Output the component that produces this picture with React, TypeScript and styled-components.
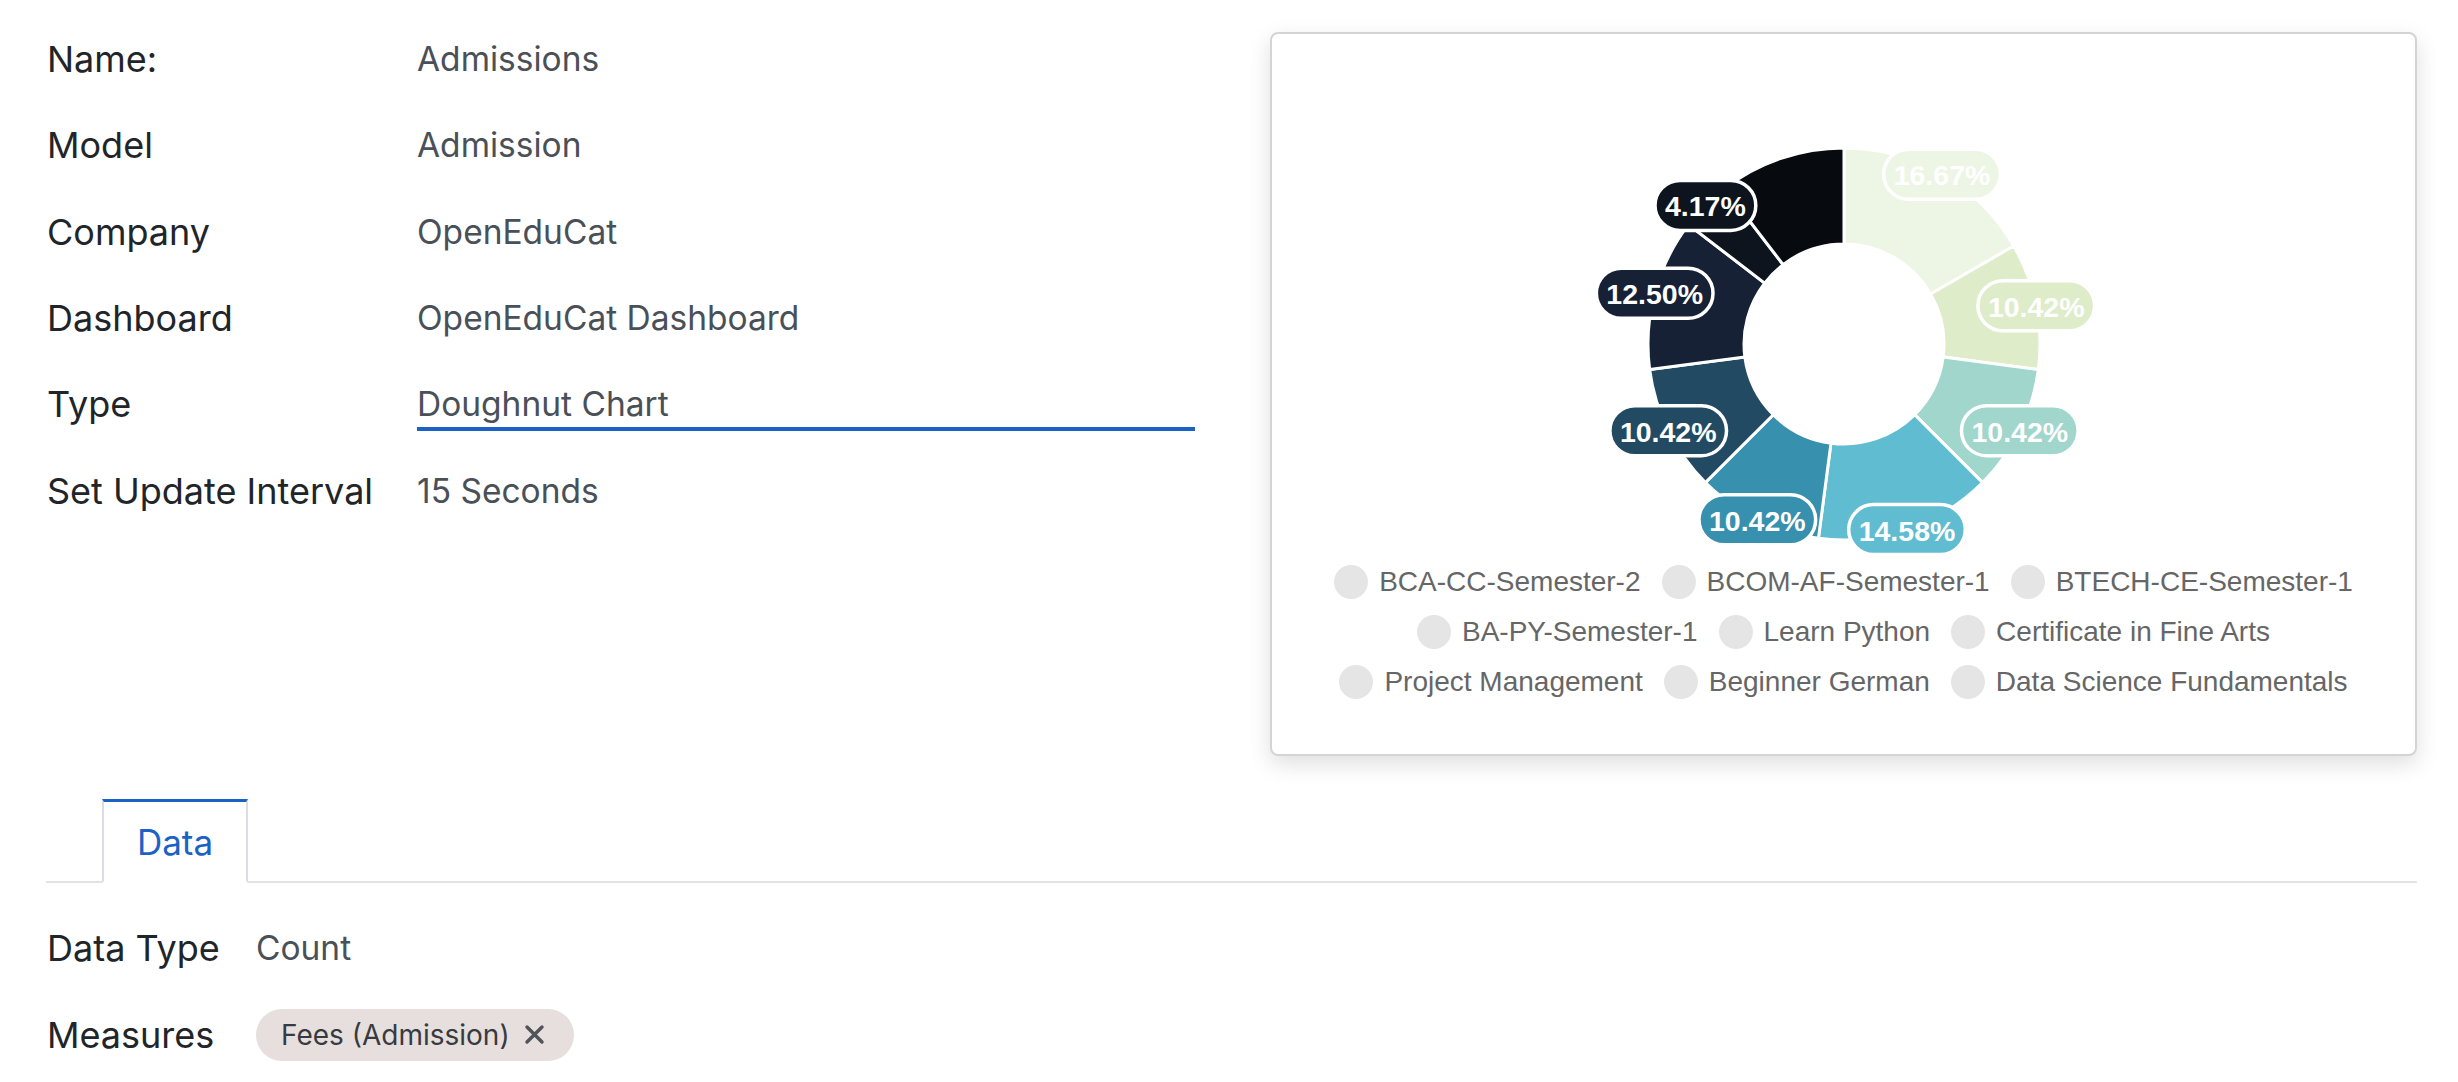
import * as React from 'react';
import styled, { createGlobalStyle } from 'styled-components';

const GlobalStyle = createGlobalStyle`
    body {
        margin: 0;
        background: #fff;
        font-family: Inter, "Noto Sans", sans-serif;
    }
`;

type Slice = { label: string; count: number; color: string; showLabel: boolean };

const slices: Slice[] = [
    { label: 'BCA-CC-Semester-2', count: 8, color: '#edf6e4', showLabel: true },
    { label: 'BCOM-AF-Semester-1', count: 5, color: '#deecc9', showLabel: true },
    { label: 'BTECH-CE-Semester-1', count: 5, color: '#a0d6cc', showLabel: true },
    { label: 'BA-PY-Semester-1', count: 7, color: '#60bcd0', showLabel: true },
    { label: 'Learn Python', count: 5, color: '#3790ae', showLabel: true },
    { label: 'Certificate in Fine Arts', count: 5, color: '#234a63', showLabel: true },
    { label: 'Project Management', count: 6, color: '#172136', showLabel: true },
    { label: 'Beginner German', count: 2, color: '#0d141e', showLabel: true },
    { label: 'Data Science Fundamentals', count: 5, color: '#070b10', showLabel: false },
];

const legendRows = [[0, 1, 2], [3, 4, 5], [6, 7, 8]];

const fields = [
    { label: 'Name:', value: 'Admissions' },
    { label: 'Model', value: 'Admission' },
    { label: 'Company', value: 'OpenEduCat' },
    { label: 'Dashboard', value: 'OpenEduCat Dashboard' },
    { label: 'Type', value: 'Doughnut Chart', focused: true },
    { label: 'Set Update Interval', value: '15 Seconds' },
];

// chart geometry (svg coords)
const CX = 572;
const CY = 310;
const R_OUT = 196;
const R_IN = 100;

const pt = (deg: number, r: number) => {
    const a = (deg * Math.PI) / 180;
    return [CX + r * Math.sin(a), CY - r * Math.cos(a)];
};

const arcPath = (a0: number, a1: number) => {
    const large = a1 - a0 > 180 ? 1 : 0;
    const [x0, y0] = pt(a0, R_OUT);
    const [x1, y1] = pt(a1, R_OUT);
    const [x2, y2] = pt(a1, R_IN);
    const [x3, y3] = pt(a0, R_IN);
    return `M${x0} ${y0} A${R_OUT} ${R_OUT} 0 ${large} 1 ${x1} ${y1} L${x2} ${y2} A${R_IN} ${R_IN} 0 ${large} 0 ${x3} ${y3} Z`;
};

const charW: Record<string, number> = { '.': 0.278, '%': 0.889 };
const textWidth = (s: string, size: number) =>
    s.split('').reduce((w, c) => w + (charW[c] ?? 0.556), 0) * size;

function Doughnut() {
    const total = slices.reduce((s, d) => s + d.count, 0);
    let acc = 0;
    const parts = slices.map((d) => {
        const a0 = (acc / total) * 360;
        acc += d.count;
        const a1 = (acc / total) * 360;
        return { ...d, a0, a1, pct: ((d.count / total) * 100).toFixed(2) + '%' };
    });

    return (
        <ChartSvg viewBox="0 0 1143 523">
            {parts.map((p) => (
                <path key={p.label} d={arcPath(p.a0, p.a1)} fill={p.color} stroke="#fff" strokeWidth={3} />
            ))}
            {parts.filter((p) => p.showLabel).map((p) => {
                const [x, y] = pt((p.a0 + p.a1) / 2, R_OUT);
                const w = textWidth(p.pct, 28.5) + 20;
                const h = 50;
                return (
                    <g key={p.label + '-lbl'}>
                        <rect x={x - w / 2} y={y - h / 2} width={w} height={h} rx={25} fill={p.color} stroke="#fff" strokeWidth={3.5} />
                        <text
                            x={x}
                            y={y + 1}
                            textAnchor="middle"
                            dominantBaseline="central"
                            fill="#fff"
                            fontFamily='"Liberation Sans", Arial, sans-serif'
                            fontWeight={700}
                            fontSize={28.5}
                        >
                            {p.pct}
                        </text>
                    </g>
                );
            })}
        </ChartSvg>
    );
}

export default function App() {
    return (
        <>
            <GlobalStyle />
            <Page>
                <Top>
                    <FormGrid>
                        {fields.map((f) => (
                            <React.Fragment key={f.label}>
                                <Label>{f.label}</Label>
                                <ValueCell>
                                    <Value focused={!!f.focused}>{f.value}</Value>
                                </ValueCell>
                            </React.Fragment>
                        ))}
                    </FormGrid>
                    <Card>
                        <Doughnut />
                        <Legend>
                            {legendRows.map((row, i) => (
                                <LegendRow key={i}>
                                    {row.map((idx) => (
                                        <LegendItem key={idx}>
                                            <LegendDot />
                                            {slices[idx].label}
                                        </LegendItem>
                                    ))}
                                </LegendRow>
                            ))}
                        </Legend>
                    </Card>
                </Top>
                <Notebook>
                    <TabBar>
                        <Tab>Data</Tab>
                    </TabBar>
                    <DataGrid>
                        <Label>Data Type</Label>
                        <PlainValue>Count</PlainValue>
                        <Label>Measures</Label>
                        <div>
                            <Chip>
                                Fees (Admission)
                                <ChipClose>
                                    <svg width="21" height="21" viewBox="0 0 21 21">
                                        <path d="M3 3 L18 18 M18 3 L3 18" stroke="currentColor" strokeWidth="3.4" strokeLinecap="round" />
                                    </svg>
                                </ChipClose>
                            </Chip>
                        </div>
                    </DataGrid>
                </Notebook>
            </Page>
        </>
    );
}

const Page = styled.div`
    width: 2458px;
    height: 1082px;
    overflow: hidden;
`;

const Top = styled.div`
    display: flex;
    justify-content: space-between;
    align-items: flex-start;
    padding-right: 41px;
`;

const FormGrid = styled.div`
    display: grid;
    grid-template-columns: 370px 778px;
    grid-auto-rows: 86.3px;
    align-items: center;
    margin: 16px 0 0 47px;
`;

const Label = styled.div`
    font-size: 36px;
    color: #212529;
    line-height: 42px;
    white-space: nowrap;
`;

const ValueCell = styled.div`
    align-self: center;
`;

const Value = styled.div<{ focused: boolean }>`
    font-size: 33.5px;
    line-height: 42px;
    color: #4a5058;
    padding-bottom: ${(p) => (p.focused ? '2px' : '0')};
    margin-bottom: ${(p) => (p.focused ? '-6px' : '0')};
    border-bottom: ${(p) => (p.focused ? '4px solid #1b62c6' : 'none')};
`;

const Card = styled.div`
    box-sizing: border-box;
    width: 1147px;
    height: 724px;
    margin-top: 32px;
    border: 2px solid #d4d4d4;
    border-radius: 8px;
    background: #fff;
    box-shadow: 0 8px 22px rgba(0, 0, 0, 0.13);
    display: flex;
    flex-direction: column;
`;

const ChartSvg = styled.svg`
    display: block;
    width: 1143px;
    height: 523px;
`;

const Legend = styled.div`
    display: flex;
    flex-direction: column;
    align-items: center;
`;

const LegendRow = styled.div`
    height: 50px;
    display: flex;
    align-items: center;
    gap: 21px;
`;

const LegendItem = styled.div`
    display: flex;
    align-items: center;
    gap: 11px;
    font-family: "Liberation Sans", Arial, sans-serif;
    font-size: 28px;
    color: #666;
    white-space: nowrap;
`;

const LegendDot = styled.span`
    width: 34px;
    height: 34px;
    border-radius: 50%;
    background: #e5e5e5;
    flex: none;
`;

const Notebook = styled.div`
    margin-top: 43px;
    padding: 0 41px 0 46px;
`;

const TabBar = styled.div`
    display: flex;
    border-bottom: 2px solid #e2e3e7;
    padding-left: 56px;
`;

const Tab = styled.div`
    box-sizing: border-box;
    width: 146px;
    height: 84px;
    margin-bottom: -2px;
    display: flex;
    align-items: center;
    justify-content: center;
    border: 2px solid #dcdde2;
    border-top: 3px solid #1b62c6;
    border-bottom: 2px solid #fff;
    background: #fff;
    color: #1b62c6;
    font-size: 35px;
`;

const DataGrid = styled.div`
    display: grid;
    grid-template-columns: 209px auto;
    grid-auto-rows: 87px;
    align-items: center;
    margin-top: 21px;
    padding-left: 1px;
`;

const PlainValue = styled.div`
    font-size: 33.5px;
    line-height: 42px;
    color: #4a5058;
`;

const Chip = styled.span`
    display: inline-flex;
    align-items: center;
    gap: 14px;
    height: 52px;
    padding: 0 29px 0 25px;
    border-radius: 26px;
    background: #e6dfdd;
    color: #373b41;
    font-size: 28px;
`;

const ChipClose = styled.span`
    display: flex;
    color: #505357;
`;
